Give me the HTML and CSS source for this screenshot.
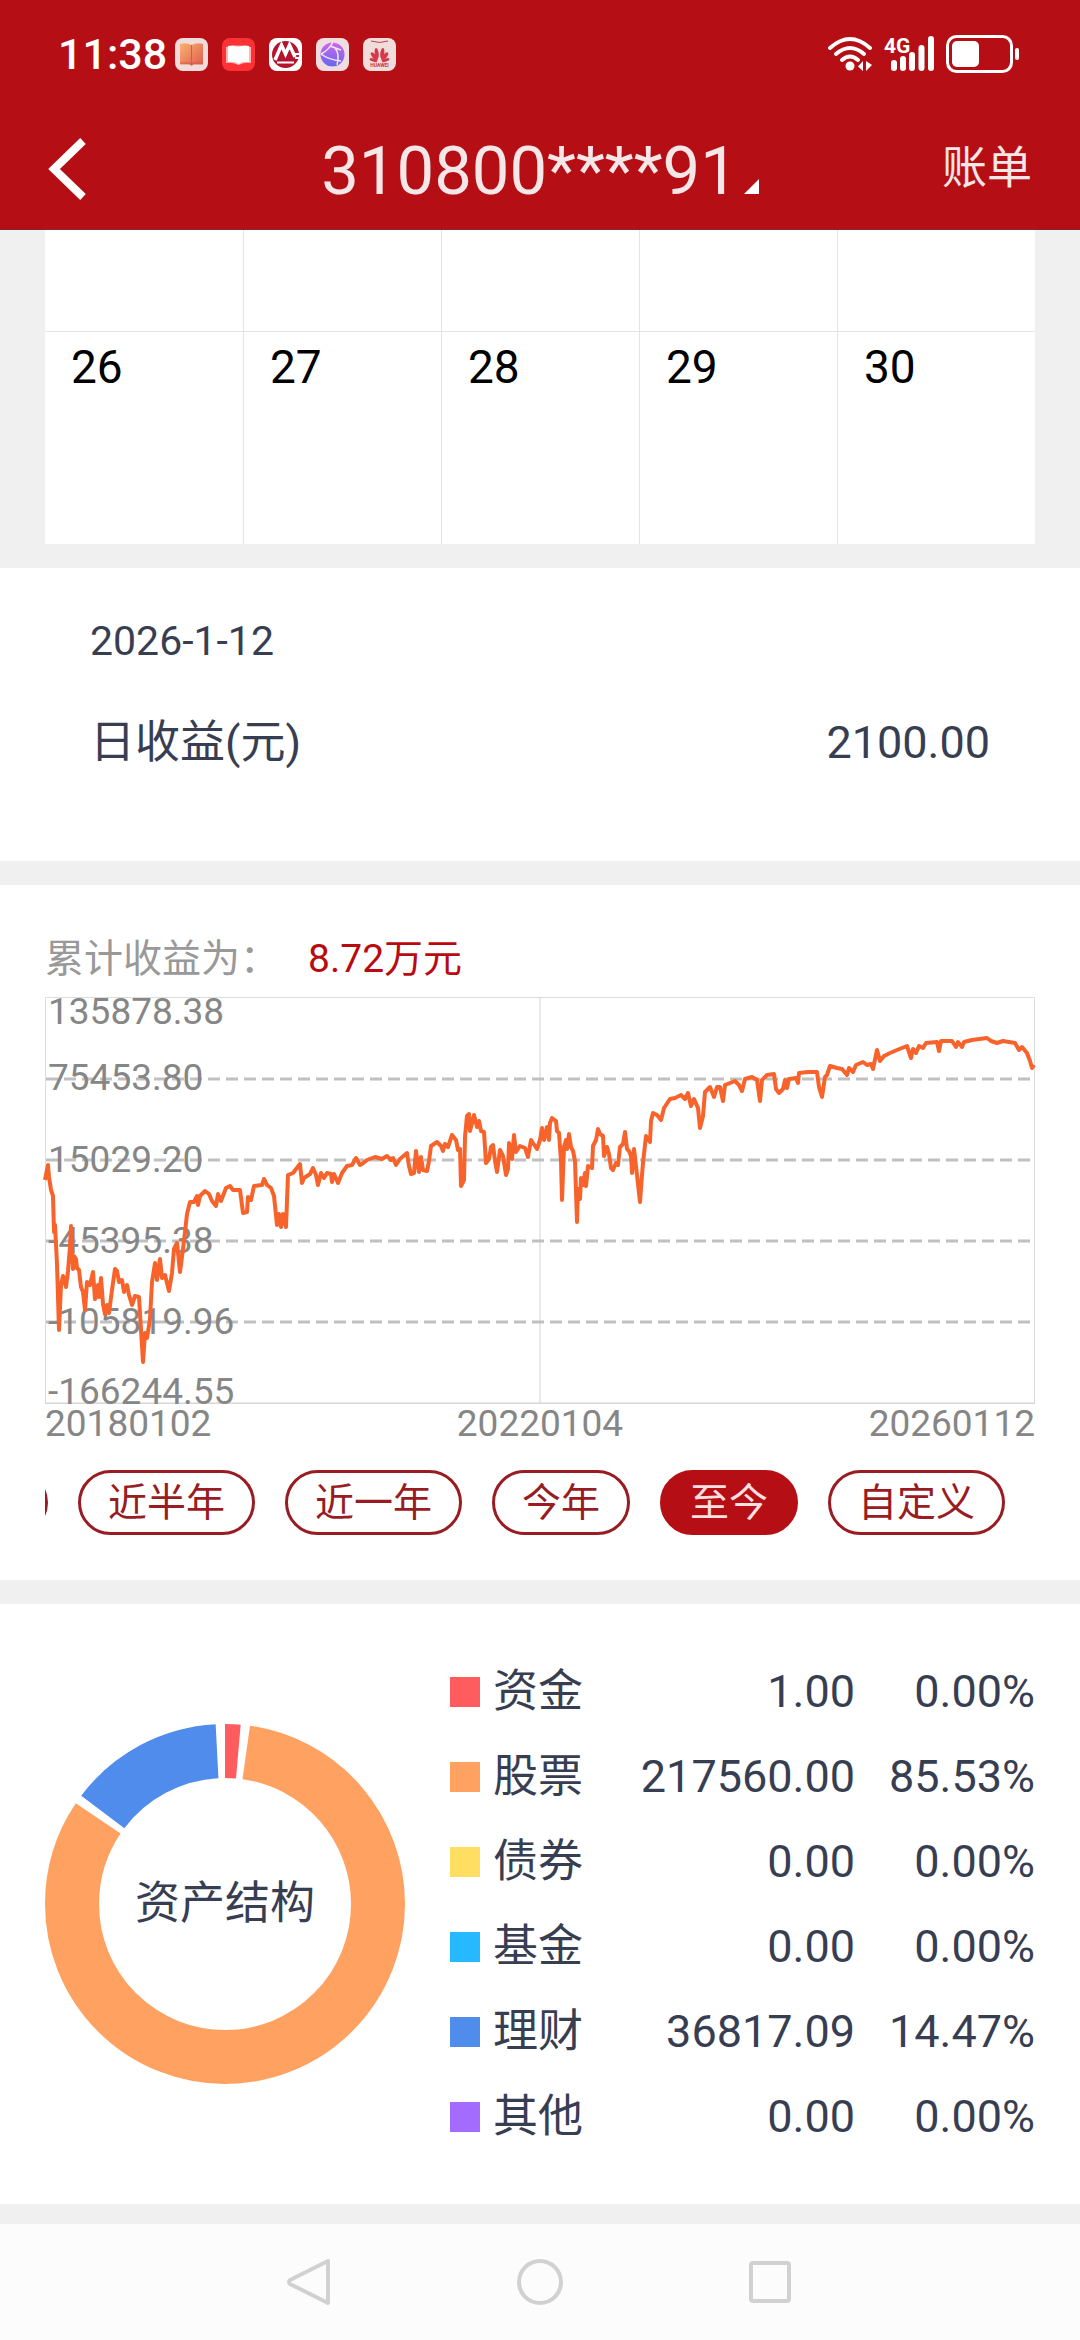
FILE: index.html
```html
<!DOCTYPE html>
<html lang="zh-CN">
<head>
    <meta charset="UTF-8">
    <meta name="viewport" content="width=device-width, initial-scale=1.0">
    <title>账户收益</title>
    <link rel="stylesheet" href="styles.css">
</head>
<body>

<header class="header">
    <div class="status">
        <span class="clock">11:38</span>
        <div class="apps">
            <svg class="app" viewBox="0 0 33 33">
                <defs>
                    <linearGradient id="page" x1="0" y1="0" x2="1" y2="1">
                        <stop offset="0" stop-color="#fbb172"/>
                        <stop offset="1" stop-color="#dd5c4c"/>
                    </linearGradient>
                    <linearGradient id="globe" x1="0" y1="0" x2="0" y2="1">
                        <stop offset="0" stop-color="#cb68ea"/>
                        <stop offset="1" stop-color="#6468ee"/>
                    </linearGradient>
                </defs>
                <rect width="33" height="33" rx="8" fill="#f1dcdc"/>
                <path d="M5 6q6-2 11.5 1q5.5-3 11.5-1v20.5h-9.5l-2 1.5l-2-1.5H5z" fill="url(#page)"/>
                <path d="M16.5 7v20" stroke="#d9584f" stroke-width="1"/>
                <path d="M5 25h10l1.5 2l1.5-2h10" fill="none" stroke="#d9584f" stroke-width="1"/>
            </svg>
            <svg class="app" viewBox="0 0 33 33">
                <rect width="33" height="33" rx="8" fill="#fd3235"/>
                <path d="M4 9q12-3 25 0v16q-6-1-12.5 2q-6.5-3-12.5-2z" fill="#ffb4b4"/>
                <path d="M6 8q5-1 8 0l2.5 1l2.500-1q4-1 8 0v16q-7-1-10.5 2q-4-3-10.5-2z" fill="#fff"/>
            </svg>
            <svg class="app" viewBox="0 0 33 33">
                <rect width="33" height="33" rx="8" fill="#fff"/>
                <circle cx="16.5" cy="16.5" r="13.5" fill="#b3132c"/>
                <path d="M6 22L12.5 7L16.5 16L20.5 7L26 19" fill="none" stroke="#fff" stroke-width="3.5"/>
                <path d="M25 16h7M26 20h6M8 24.5h17" stroke="#fff" stroke-width="2"/>
            </svg>
            <svg class="app" viewBox="0 0 33 33">
                <rect width="33" height="33" rx="8" fill="#f1dcdf"/>
                <circle cx="16.5" cy="16.5" r="12" fill="url(#globe)"/>
                <path d="M5 16Q13 12 17 4M5 16Q13 22 25 23M19 10Q24 16 21 27M14 8L25 12" fill="none" stroke="#f6e8f6" stroke-width="1.5"/>
            </svg>
            <svg class="app" viewBox="0 0 33 33">
                <rect width="33" height="33" rx="8" fill="#f1dcdc"/>
                <path d="M8 3q8.5 3 17 0" fill="none" stroke="#bd4048" stroke-width="1"/>
                <g fill="#d53a48">
                    <ellipse cx="14.5" cy="15" rx="2" ry="5.5" transform="rotate(-8 16.5 21)"/>
                    <ellipse cx="18.5" cy="15" rx="2" ry="5.5" transform="rotate(8 16.5 21)"/>
                    <ellipse cx="14.5" cy="16" rx="2" ry="5" transform="rotate(-38 16.5 22)"/>
                    <ellipse cx="18.5" cy="16" rx="2" ry="5" transform="rotate(38 16.5 22)"/>
                    <ellipse cx="15" cy="17" rx="1.5" ry="4" transform="rotate(-68 16.5 23)"/>
                    <ellipse cx="18" cy="17" rx="1.5" ry="4" transform="rotate(68 16.5 23)"/>
                </g>
                <text x="16.5" y="29" class="brand">HUAWEI</text>
            </svg>
        </div>
        <svg class="wifi" viewBox="0 0 44 36">
            <g fill="none" stroke="#fff" stroke-width="4" stroke-linecap="round">
                <path d="M2 12Q22-6 42 12"/>
                <path d="M8 18Q22 6 36 18"/>
                <path d="M14 24Q22 17 30 24"/>
            </g>
            <circle cx="22" cy="30" r="4.5" fill="#fff"/>
            <path d="M35 25v10l-5-4.5zM38 25v10l6-6z" fill="#fff"/>
        </svg>
        <svg class="signal" viewBox="0 0 51 36">
            <text x="0" y="17" class="net">4G</text>
            <path d="M10 27v5M19 23v9M28 19v13M37.5 12v20M47 3v29" stroke="#fff" stroke-width="6" stroke-linecap="round"/>
        </svg>
        <svg class="battery" viewBox="0 0 74 38">
            <rect x="1.5" y="1.5" width="64" height="35" rx="9" fill="none" stroke="#fff" stroke-width="3"/>
            <rect x="6" y="6" width="27" height="26" rx="5" fill="#fff"/>
            <rect x="69" y="13" width="4" height="12" rx="2" fill="#fff"/>
        </svg>
    </div>
    <div class="appbar">
        <button class="back" aria-label="返回">
            <svg viewBox="0 0 38 62" width="38" height="62">
                <path d="M35 3L6 31L35 59" fill="none" stroke="#fff" stroke-width="8"/>
            </svg>
        </button>
        <button class="account">
            310800****91
            <svg viewBox="0 0 15 15" width="15" height="15"><path d="M15 0V15H0z" fill="#fff"/></svg>
        </button>
        <a class="bill" href="#">账单</a>
    </div>
</header>

<main>
    <table class="calendar">
        <tbody>
        <tr class="cut"><td></td><td></td><td></td><td></td><td></td></tr>
        <tr><td>26</td><td>27</td><td>28</td><td>29</td><td>30</td></tr>
        </tbody>
    </table>

    <section class="day">
        <div class="date">2026-1-12</div>
        <div class="income"><span>日收益(元)</span><span>2100.00</span></div>
    </section>

    <section class="trend">
        <div class="total"><span>累计收益为：</span><strong>8.72万元</strong></div>
        <svg class="chart" viewBox="0 0 990 407">
            <rect x="0.5" y="0.5" width="989" height="406" fill="none" stroke="#dcdcdc"/>
            <path d="M0 406H990M495 0V406" stroke="#d3d3d3" stroke-width="1"/>
            <path d="M1 82H989M1 163H989M1 244H989M1 325H989" stroke="#c0c0c0" stroke-width="3" stroke-dasharray="12 6"/>
            <g class="axis">
                <text x="3" y="27">135878.38</text>
                <text x="3" y="93">75453.80</text>
                <text x="3" y="175">15029.20</text>
                <text x="3" y="256">-45395.38</text>
                <text x="3" y="337">-105819.96</text>
                <text x="3" y="407">-166244.55</text>
            </g>
            <polyline class="line" points="
                0,183 3,168 4,180 6,193 8,199 9,235 10,228 12,267 14,333 16,288 18,279 21,290 23,274 25,250 26,229
                28,272 29,259 31,262 32,271 34,273 36,290 38,295 40,313 42,285 45,288 48,275 50,302 53,288 54,300
                56,281 58,307 60,317 62,308 64,316 67,293 70,272 72,274 74,285 77,283 79,295 82,288 84,298 87,308
                90,299 94,300 96,333 98,365 100,336 102,341 105,322 107,285 110,266 112,283 115,262 117,281 120,278
                124,294 127,276 129,252 132,246 135,275 138,252 140,235 142,217 145,205 149,205 152,199 153,208
                155,199 160,194 164,197 167,204 171,209 173,197 176,204 181,191 185,189 188,193 195,193 198,216
                202,215 203,200 206,203 209,189 217,188 219,182 222,188 226,191 229,199 232,228 234,217 236,230
                238,217 241,230 243,178 248,176 255,167 257,186 259,181 265,177 268,171 271,178 273,188 276,176
                279,181 282,176 286,177 287,185 289,177 293,186 297,176 302,169 307,168 311,161 315,168 317,167
                322,163 330,160 337,162 342,159 346,163 348,161 351,168 355,162 362,156 364,169 366,177 369,176
                371,154 374,175 376,160 378,173 382,174 384,164 386,149 392,145 396,149 398,154 400,147 403,150
                407,138 411,143 413,153 415,152 416,189 419,183 420,140 422,119 424,117 425,134 429,118 432,130
                434,124 436,134 439,135 441,166 444,162 446,150 448,148 450,164 452,175 455,153 458,159 461,178
                463,172 464,146 467,162 469,138 471,155 475,149 480,151 483,160 486,143 492,152 495,143 497,131
                499,143 502,130 504,143 505,126 507,121 511,124 512,134 514,136 516,164 517,203 519,150 521,143
                522,152 524,137 526,150 528,154 530,164 532,225 533,192 535,202 536,181 538,188 540,176 541,189
                543,169 547,171 548,149 551,143 553,132 555,137 558,139 559,159 562,150 564,157 566,171 568,173
                571,166 573,168 575,150 578,147 580,135 582,152 584,154 586,159 587,176 589,152 592,178 595,205
                597,178 598,166 601,139 605,145 606,124 608,116 612,118 616,123 619,111 625,102 630,101 636,98
                640,102 643,96 646,109 649,102 653,111 655,131 658,119 660,95 665,90 669,100 672,90 675,90 676,95
                678,104 680,88 685,86 690,84 694,88 697,94 700,82 707,80 712,83 715,104 717,83 722,78 729,77
                731,92 734,96 738,92 740,83 742,91 744,82 751,81 753,86 754,76 763,75 772,75 774,90 777,100
                780,80 782,78 785,69 792,71 797,72 802,78 804,71 808,75 811,68 818,65 822,68 826,67 828,72 832,53
                835,64 839,59 845,56 852,53 862,49 866,61 868,52 871,56 874,49 878,51 881,46 892,45 894,54 896,44
                902,44 907,44 911,50 913,45 917,50 919,45 927,43 942,41 946,44 952,46 958,44 970,46 974,53 977,50
                982,56 985,64 987,71 989,68"/>
        </svg>
        <div class="dates"><span>20180102</span><span>20220104</span><span>20260112</span></div>
        <div class="ranges">
            <button>近三月</button>
            <button>近半年</button>
            <button>近一年</button>
            <button>今年</button>
            <button class="active">至今</button>
            <button>自定义</button>
        </div>
    </section>

    <section class="assets">
        <div class="donut">
            <!-- r = 153, ring 54 wide, 3deg gap between slices -->
            <svg viewBox="0 0 360 360">
                <g fill="none" stroke-width="54" transform="rotate(-90 180 180)">
                    <circle cx="180" cy="180" r="153" pathLength="360" stroke="#ff5c5f" stroke-dasharray="5 355"/>
                    <circle cx="180" cy="180" r="153" pathLength="360" stroke="#ffa160" stroke-dasharray="296 64" stroke-dashoffset="-8"/>
                    <circle cx="180" cy="180" r="153" pathLength="360" stroke="#4f8ceb" stroke-dasharray="50 310" stroke-dashoffset="-307"/>
                </g>
            </svg>
            <span class="donut-title">资产结构</span>
        </div>
        <table class="legend">
            <tbody>
            <tr><th><i class="dot cash"></i>资金</th><td>1.00</td><td class="pct">0.00%</td></tr>
            <tr><th><i class="dot stock"></i>股票</th><td>217560.00</td><td class="pct">85.53%</td></tr>
            <tr><th><i class="dot bond"></i>债券</th><td>0.00</td><td class="pct">0.00%</td></tr>
            <tr><th><i class="dot fund"></i>基金</th><td>0.00</td><td class="pct">0.00%</td></tr>
            <tr><th><i class="dot wealth"></i>理财</th><td>36817.09</td><td class="pct">14.47%</td></tr>
            <tr><th><i class="dot other"></i>其他</th><td>0.00</td><td class="pct">0.00%</td></tr>
            </tbody>
        </table>
    </section>
</main>

<nav class="navbar">
    <button aria-label="后退">
        <svg viewBox="0 0 48 48"><path d="M42 3V45L4 26Q2 24 4 22z"/></svg>
    </button>
    <button aria-label="主页">
        <svg viewBox="0 0 48 48"><circle cx="24" cy="24" r="21"/></svg>
    </button>
    <button aria-label="最近任务">
        <svg viewBox="0 0 48 48"><rect x="5" y="5" width="38" height="38" rx="2"/></svg>
    </button>
</nav>

</body>
</html>
```
FILE: styles.css
```css
* {
    box-sizing: border-box;
}
body {
    margin: 0;
    min-height: 100vh;
    display: flex;
    flex-direction: column;
    background-color: #f0f0f0;
    color: #383e52;
    font-family: Roboto, "Noto Sans CJK SC", sans-serif;
    font-size: 45px;
    line-height: 60px;
}
button {
    font-family: inherit;
    background: none;
    border: none;
    padding: 0;
    margin: 0;
    cursor: pointer;
}
svg {
    display: block;
}

/* header */
.header {
    background-color: #b50f15;
    border-bottom: 1px solid #7c2a2f;
    color: #f5e6e8;
}
.status {
    display: flex;
    align-items: center;
    height: 108px;
    padding: 0 60px 0 58px;
}
.clock {
    color: #fff;
    font-size: 43px;
    font-weight: 500;
    margin-right: 8px;
}
.apps {
    display: flex;
    gap: 14px;
    margin-right: auto;
}
.app {
    width: 33px;
    height: 33px;
}
.brand {
    font-size: 5px;
    font-weight: 700;
    text-anchor: middle;
    fill: #c6323c;
}
.wifi {
    width: 44px;
    height: 36px;
    margin-right: 12px;
}
.signal {
    width: 51px;
    height: 36px;
    margin-right: 11px;
}
.net {
    font-size: 21px;
    font-weight: 700;
    fill: #fff;
}
.battery {
    width: 74px;
    height: 38px;
}
.appbar {
    display: grid;
    grid-template-columns: 1fr auto 1fr;
    align-items: center;
    height: 121px;
    padding: 0 48px;
}
.back {
    justify-self: start;
}
.account {
    display: flex;
    align-items: baseline;
    gap: 6px;
    padding-top: 5px;
    color: inherit;
    font-size: 67px;
}
.bill {
    justify-self: end;
    color: inherit;
    text-decoration: none;
}

/* calendar */
.calendar {
    width: calc(100% - 90px);
    margin: 0 45px 24px;
    table-layout: fixed;
    border-collapse: separate;
    border-spacing: 0;
    background-color: #fff;
    color: #000;
    font-size: 46px;
}
.calendar td {
    height: 213px;
    padding: 10px 26px;
    vertical-align: top;
    line-height: 50px;
    border-left: 1px solid #e4e4e4;
    border-top: 1px solid #e4e4e4;
}
.calendar .cut td {
    height: 101px;
    border-top: none;
}
.calendar td:first-child {
    border-left: none;
}

section {
    background-color: #fff;
    margin-bottom: 24px;
}

/* selected day */
.day {
    padding: 48px 90px 88px;
}
.date {
    font-size: 41px;
    line-height: 50px;
    margin-bottom: 47px;
}
.income {
    display: flex;
    justify-content: space-between;
}

/* income trend */
.trend {
    padding: 44px 45px 45px;
}
.total {
    display: flex;
    gap: 29px;
    margin-bottom: 8px;
    font-size: 39px;
    color: #999;
}
.total strong {
    font-weight: 400;
    color: #b90a10;
}
.chart {
    width: 100%;
    height: auto;
    overflow: visible;
}
.axis {
    font-size: 37px;
    fill: #868686;
}
.line {
    fill: none;
    stroke: #f7632a;
    stroke-width: 4;
    stroke-linejoin: round;
}
.dates {
    display: flex;
    justify-content: space-between;
    margin-bottom: 26px;
    font-size: 37px;
    line-height: 40px;
    color: #868686;
}
.ranges {
    display: flex;
    justify-content: flex-end;
    gap: 30px;
    padding-right: 30px;
    overflow: hidden;
}
.ranges button {
    flex-shrink: 0;
    height: 65px;
    padding: 0 27px;
    border: 3px solid #981c22;
    border-radius: 33px;
    color: #981c22;
    font-size: 39px;
    line-height: 58px;
}
.ranges .active {
    border-color: #b50f15;
    background-color: #b50f15;
    color: #fbdfe1;
}

/* asset structure */
.assets {
    display: flex;
    align-items: center;
    gap: 45px;
    padding: 45px;
    margin-bottom: 20px;
}
.donut {
    display: grid;
    place-items: center;
    flex-shrink: 0;
    width: 360px;
}
.donut svg,
.donut-title {
    grid-area: 1 / 1;
}
.donut svg {
    width: 100%;
}
.legend {
    flex: 1;
    border-collapse: collapse;
}
.legend tr {
    height: 85px;
}
.legend th {
    padding: 0;
    font-weight: 400;
    text-align: left;
}
.legend td {
    padding: 0;
    text-align: right;
}
.legend .pct {
    width: 180px;
}
.dot {
    display: inline-block;
    width: 30px;
    height: 30px;
    margin-right: 13px;
}
.cash { background-color: #ff5c5f; }
.stock { background-color: #ffa160; }
.bond { background-color: #ffde62; }
.fund { background-color: #26b9ff; }
.wealth { background-color: #4f8ceb; }
.other { background-color: #a46bff; }

/* system navigation */
.navbar {
    display: flex;
    justify-content: center;
    align-items: center;
    gap: 182px;
    height: 116px;
    margin-top: auto;
    background-color: #fcfcfc;
}
.navbar svg {
    width: 48px;
    height: 48px;
    fill: none;
    stroke: #d1d1d1;
    stroke-width: 4;
    stroke-linejoin: round;
}
```
